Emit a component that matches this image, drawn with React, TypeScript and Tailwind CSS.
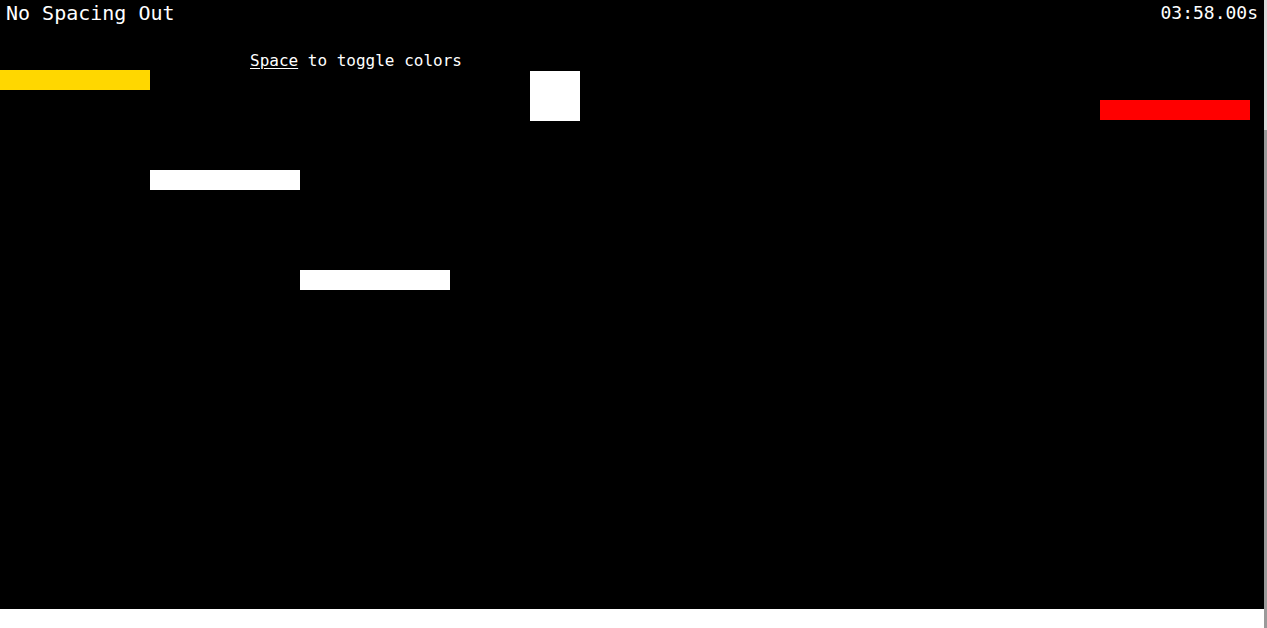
import React from "react";

type Block = {
  id: string;
  x: number;
  y: number;
  w: number;
  h: number;
  color: string;
};

const blocks: Block[] = [
  { id: "gold", x: 0, y: 70, w: 150, h: 20, color: "#ffd700" },
  { id: "w1", x: 150, y: 170, w: 150, h: 20, color: "#ffffff" },
  { id: "w2", x: 300, y: 270, w: 150, h: 20, color: "#ffffff" },
  { id: "red", x: 1100, y: 100, w: 150, h: 20, color: "#ff0000" },
  { id: "player", x: 530, y: 71, w: 50, h: 50, color: "#ffffff" },
];

const App = () => {
  return (
    <div className="flex w-[1267px] h-[628px] bg-white font-['DejaVu_Sans_Mono','Liberation_Mono',monospace]">
      <div className="flex flex-col">
        <div className="relative w-[1264px] h-[609px] bg-black text-white overflow-hidden">
          <div className="flex justify-between items-start px-[6px]">
            <span className="text-[20px] leading-[26px]">No Spacing Out</span>
            <span className="text-[18px] leading-[26px]">03:58.00s</span>
          </div>
          <div className="pl-[250px] pt-[25px] text-[16px] leading-[20px]">
            <span className="underline underline-offset-2">Space</span> to toggle colors
          </div>
          {blocks.map((b) => (
            <div
              key={b.id}
              className="absolute"
              style={{ left: b.x, top: b.y, width: b.w, height: b.h, background: b.color }}
            />
          ))}
        </div>
      </div>
      <div className="flex flex-col w-[3px] h-[628px] bg-[#e5e5e5]">
        <div className="h-[130px] bg-[#dcdcdc]" />
        <div className="flex-1 bg-[#9a9a9a]" />
      </div>
    </div>
  );
};

export default App;
